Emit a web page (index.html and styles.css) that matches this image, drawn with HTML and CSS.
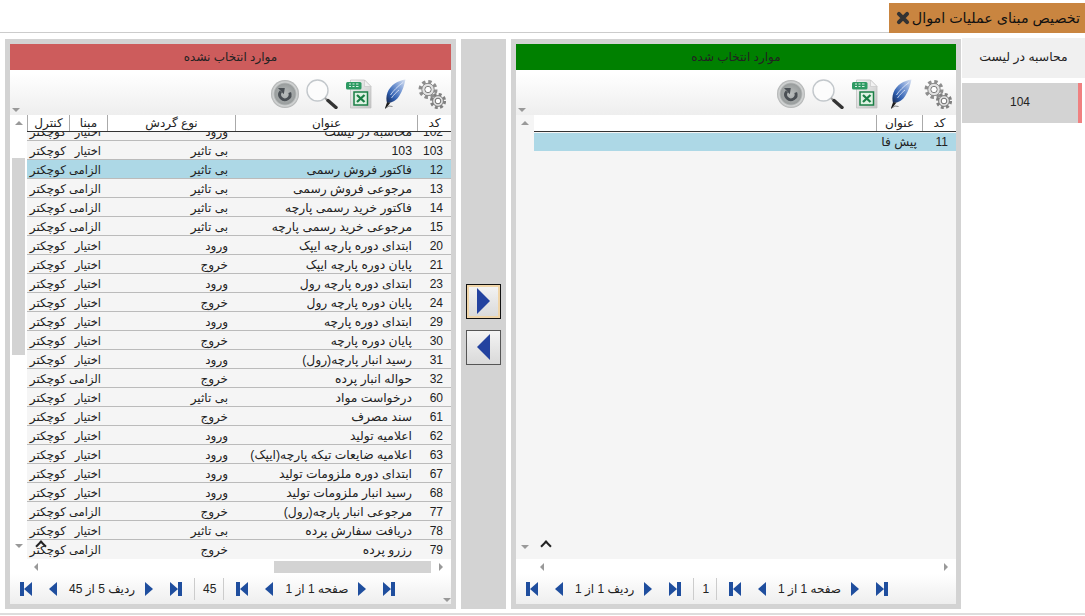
FILE: index.html
```html
<!DOCTYPE html>
<html lang="fa">
<head>
  <meta charset="UTF-8">
  <title>تخصیص مبنای عملیات اموال</title>
  <link rel="stylesheet" href="styles.css">
</head>
<body>
  <svg class="sprite" xmlns="http://www.w3.org/2000/svg">
    <defs>
      <linearGradient id="pageFill" x1="0" y1="0" x2="1" y2="1"><stop offset="0" stop-color="#f6f6f6"/><stop offset="1" stop-color="#c4c4c4"/></linearGradient>
      <radialGradient id="roundFill" cx="0.5" cy="0.5" r="0.5"><stop offset="0" stop-color="#b9bdbd"/><stop offset="0.72" stop-color="#9a9e9e"/><stop offset="0.85" stop-color="#d4d6d6"/><stop offset="1" stop-color="#aeb0b0"/></radialGradient>
      <linearGradient id="featherFill" x1="1" y1="0" x2="0" y2="1"><stop offset="0" stop-color="#dde5f3"/><stop offset="0.35" stop-color="#7f9fd6"/><stop offset="0.7" stop-color="#2f5fb0"/><stop offset="1" stop-color="#16264d"/></linearGradient>
    </defs>
    <symbol id="ico-gears" viewBox="0 0 28 30">
      <circle cx="10" cy="10.500" r="7" fill="none" stroke="#8e8e8e" stroke-width="5" stroke-dasharray="3 2.500"/>
      <circle cx="10" cy="10.500" r="6.200" fill="#e2e2e2" stroke="#8a8a8a"/>
      <circle cx="10" cy="10.500" r="3.200" fill="#fff" stroke="#7c7c7c"/>
      <circle cx="20" cy="22" r="6" fill="none" stroke="#808080" stroke-width="4.200" stroke-dasharray="2.600 2.100"/>
      <circle cx="20" cy="22" r="5.400" fill="#dedede" stroke="#7c7c7c"/>
      <circle cx="20" cy="22" r="2.800" fill="#fff" stroke="#6e6e6e"/>
    </symbol>
    <symbol id="ico-feather" viewBox="0 0 22 30">
      <path d="M21.500 .5C14 1.500 6.500 6 3.500 13.500 2 17.500 2.200 21 3 24l3.500-.5C9 23 13 21 15.500 16.500 18.500 11.500 20.500 6 21.500 .5z" fill="url(#featherFill)"/>
      <path d="M19 3.500C14 7 9 12 6.500 16M15 11c-2.500 2-5 4.500-7.500 8" fill="none" stroke="#e8eefa" stroke-width=".8"/>
      <path d="M3 23.500l3.500 0L3.800 27 1.500 29.500 1 29z" fill="#1c1c1c"/>
      <path d="M1 29.500L5 27l3.500.5" fill="none" stroke="#555" stroke-width=".7"/>
    </symbol>
    <symbol id="ico-excel" viewBox="0 0 26 30">
      <path d="M4.500 1h14l6.500 6.500V29H4.500z" fill="url(#pageFill)" stroke="#bdbdbd" stroke-width=".7"/>
      <path d="M18.500 1L25 7.500h-6.500z" fill="#f2f2f2" stroke="#bdbdbd" stroke-width=".5"/>
      <rect x="0" y="3" width="15.500" height="7.500" rx="1.500" fill="#2e9a63"/>
      <path d="M3 5h2M6.500 5h2M10 5h2.500M3 7.500h2M6.500 7.500h2M10 7.500h2.500" stroke="#d9efe2" stroke-width="1.200"/>
      <rect x="8" y="13" width="13.500" height="13" fill="#dff2e3" stroke="#1a7f45" stroke-width="1.500"/>
      <path d="M11 16l7.500 7M18.500 16l-7.500 7" stroke="#1a7f45" stroke-width="2.300"/>
    </symbol>
    <symbol id="ico-search" viewBox="0 0 32 30">
      <circle cx="11.500" cy="11.500" r="10.500" fill="#fcfcfc" stroke="#c3c8cc" stroke-width="1.400"/>
      <path d="M19 19l3 3" stroke="#9a9a9a" stroke-width="2"/>
      <path d="M22 21.500l8 7" stroke="#333" stroke-width="3.400" stroke-linecap="round"/>
    </symbol>
    <symbol id="ico-refresh" viewBox="0 0 28 28">
      <circle cx="14" cy="14" r="14" fill="url(#roundFill)"/>
      <path d="M18.700 12.500a5.200 5.200 0 1 1-8.900-1.200" fill="none" stroke="#4a4f54" stroke-width="2.900"/>
      <path d="M7 8h6.800l-1 6.200z" fill="#4a4f54"/>
    </symbol>
    <symbol id="ico-first" viewBox="0 0 12 14"><path d="M0 0h4v14H0zM12 0v14L4 7z"/></symbol>
    <symbol id="ico-prev" viewBox="0 0 8 14" preserveAspectRatio="none"><path d="M8 0v14L0 7z"/></symbol>
    <symbol id="ico-next" viewBox="0 0 8 14" preserveAspectRatio="none"><path d="M0 0v14l8-7z"/></symbol>
    <symbol id="ico-last" viewBox="0 0 12 14"><path d="M0 0v14l8-7zM8 0h4v14H8z"/></symbol>
  </svg>

  <div class="topbar">
    <div class="title-tab">
      <svg class="close-ico" viewBox="0 0 12 12"><path d="M2.500 2.500l7 7M9.500 2.500l-7 7" stroke="#333" stroke-width="3.400" stroke-linecap="round"/></svg>
      <span>تخصیص مبنای عملیات اموال</span>
    </div>
  </div>

  <div class="main">
    <!-- موارد انتخاب نشده -->
    <section class="panel panel-left">
      <div class="panel-title title-red">موارد انتخاب نشده</div>
      <div class="toolbar">
        <svg class="tool tool-gears"><use href="#ico-gears"/></svg>
        <svg class="tool tool-feather"><use href="#ico-feather"/></svg>
        <svg class="tool tool-excel"><use href="#ico-excel"/></svg>
        <svg class="tool tool-search"><use href="#ico-search"/></svg>
        <svg class="tool tool-refresh"><use href="#ico-refresh"/></svg>
        <i class="arrow-down toolbar-arrow"></i>
      </div>
      <div class="grid-wrap">
        <div class="gutter">
          <i class="arrow-up"></i>
          <div class="thumb-v"></div>
          <i class="arrow-down"></i>
        </div>
        <div class="grid">
          <div class="row row-head cols-5">
            <span>کد</span><span>عنوان</span><span>نوع گردش</span><span>مبنا</span><span>کنترل</span>
          </div>
          <div class="grid-body">
            <div class="row cols-5 row-clipped"><span>102</span><span>محاسبه در لیست</span><span>ورود</span><span>اختیار</span><span>کوچکتر</span></div>
            <div class="row cols-5"><span>103</span><span>103</span><span>بی تاثیر</span><span>اختیار</span><span>کوچکتر</span></div>
            <div class="row cols-5 row-active"><span>12</span><span>فاکتور فروش رسمی</span><span>بی تاثیر</span><span>الزامی</span><span>کوچکتر</span></div>
            <div class="row cols-5"><span>13</span><span>مرجوعی فروش رسمی</span><span>بی تاثیر</span><span>الزامی</span><span>کوچکتر</span></div>
            <div class="row cols-5"><span>14</span><span>فاکتور خرید رسمی پارچه</span><span>بی تاثیر</span><span>الزامی</span><span>کوچکتر</span></div>
            <div class="row cols-5"><span>15</span><span>مرجوعی خرید رسمی پارچه</span><span>بی تاثیر</span><span>الزامی</span><span>کوچکتر</span></div>
            <div class="row cols-5"><span>20</span><span>ابتدای دوره پارچه ایپک</span><span>ورود</span><span>اختیار</span><span>کوچکتر</span></div>
            <div class="row cols-5"><span>21</span><span>پایان دوره پارچه ایپک</span><span>خروج</span><span>اختیار</span><span>کوچکتر</span></div>
            <div class="row cols-5"><span>23</span><span>ابتدای دوره پارچه رول</span><span>ورود</span><span>اختیار</span><span>کوچکتر</span></div>
            <div class="row cols-5"><span>24</span><span>پایان دوره پارچه رول</span><span>خروج</span><span>اختیار</span><span>کوچکتر</span></div>
            <div class="row cols-5"><span>29</span><span>ابتدای دوره پارچه</span><span>ورود</span><span>اختیار</span><span>کوچکتر</span></div>
            <div class="row cols-5"><span>30</span><span>پایان دوره پارچه</span><span>خروج</span><span>اختیار</span><span>کوچکتر</span></div>
            <div class="row cols-5"><span>31</span><span>رسید انبار پارچه(رول)</span><span>ورود</span><span>اختیار</span><span>کوچکتر</span></div>
            <div class="row cols-5"><span>32</span><span>حواله انبار پرده</span><span>خروج</span><span>الزامی</span><span>کوچکتر</span></div>
            <div class="row cols-5"><span>60</span><span>درخواست مواد</span><span>بی تاثیر</span><span>اختیار</span><span>کوچکتر</span></div>
            <div class="row cols-5"><span>61</span><span>سند مصرف</span><span>خروج</span><span>اختیار</span><span>کوچکتر</span></div>
            <div class="row cols-5"><span>62</span><span>اعلامیه تولید</span><span>ورود</span><span>اختیار</span><span>کوچکتر</span></div>
            <div class="row cols-5"><span>63</span><span>اعلامیه ضایعات تیکه پارچه(ایپک)</span><span>ورود</span><span>اختیار</span><span>کوچکتر</span></div>
            <div class="row cols-5"><span>67</span><span>ابتدای دوره ملزومات تولید</span><span>ورود</span><span>اختیار</span><span>کوچکتر</span></div>
            <div class="row cols-5"><span>68</span><span>رسید انبار ملزومات تولید</span><span>ورود</span><span>اختیار</span><span>کوچکتر</span></div>
            <div class="row cols-5"><span>77</span><span>مرجوعی انبار پارچه(رول)</span><span>خروج</span><span>الزامی</span><span>کوچکتر</span></div>
            <div class="row cols-5"><span>78</span><span>دریافت سفارش پرده</span><span>بی تاثیر</span><span>اختیار</span><span>کوچکتر</span></div>
            <div class="row cols-5 row-last"><span>79</span><span>رزرو پرده</span><span>خروج</span><span>الزامی</span><span>کوچکتر</span></div>
          </div>
        </div>
        <i class="caret caret-left"></i>
      </div>
      <div class="hscroll">
        <i class="arrow-left"></i>
        <div class="thumb-h"></div>
        <i class="arrow-right"></i>
      </div>
      <div class="pager">
        <svg class="pg-first"><use href="#ico-first"/></svg>
        <svg class="pg-prev"><use href="#ico-prev"/></svg>
        <span class="pg-text" dir="rtl">ردیف 5 از 45</span>
        <svg class="pg-next"><use href="#ico-next"/></svg>
        <svg class="pg-last"><use href="#ico-last"/></svg>
        <span class="pg-count">45</span>
        <svg class="pg-first"><use href="#ico-first"/></svg>
        <svg class="pg-prev"><use href="#ico-prev"/></svg>
        <span class="pg-text" dir="rtl">صفحه 1 از 1</span>
        <svg class="pg-next"><use href="#ico-next"/></svg>
        <svg class="pg-last"><use href="#ico-last"/></svg>
        <i class="arrow-down pager-arrow"></i>
      </div>
    </section>

    <div class="mover">
      <button class="move-btn move-active"><svg class="move-ico"><use href="#ico-next"/></svg></button>
      <button class="move-btn"><svg class="move-ico"><use href="#ico-prev"/></svg></button>
    </div>

    <!-- موارد انتخاب شده -->
    <section class="panel panel-right">
      <div class="panel-title title-green">موارد انتخاب شده</div>
      <div class="toolbar">
        <svg class="tool tool-gears"><use href="#ico-gears"/></svg>
        <svg class="tool tool-feather"><use href="#ico-feather"/></svg>
        <svg class="tool tool-excel"><use href="#ico-excel"/></svg>
        <svg class="tool tool-search"><use href="#ico-search"/></svg>
        <svg class="tool tool-refresh"><use href="#ico-refresh"/></svg>
        <i class="arrow-down toolbar-arrow"></i>
      </div>
      <div class="grid-wrap">
        <div class="gutter">
          <i class="arrow-up"></i>
          <i class="arrow-down gutter-end"></i>
        </div>
        <div class="grid">
          <div class="row row-head cols-2">
            <span>کد</span><span>عنوان</span><span class="cell-empty"></span>
          </div>
          <div class="grid-body">
            <div class="row cols-2 row-active row-first"><span>11</span><span>پیش فا</span><span></span></div>
          </div>
        </div>
        <i class="caret caret-right"></i>
      </div>
      <div class="hscroll">
        <i class="arrow-left"></i>
        <div class="thumb-none"></div>
        <i class="arrow-right"></i>
      </div>
      <div class="pager">
        <svg class="pg-first"><use href="#ico-first"/></svg>
        <svg class="pg-prev"><use href="#ico-prev"/></svg>
        <span class="pg-text" dir="rtl">ردیف 1 از 1</span>
        <svg class="pg-next"><use href="#ico-next"/></svg>
        <svg class="pg-last"><use href="#ico-last"/></svg>
        <span class="pg-count">1</span>
        <svg class="pg-first"><use href="#ico-first"/></svg>
        <svg class="pg-prev"><use href="#ico-prev"/></svg>
        <span class="pg-text" dir="rtl">صفحه 1 از 1</span>
        <svg class="pg-next"><use href="#ico-next"/></svg>
        <svg class="pg-last"><use href="#ico-last"/></svg>
      </div>
    </section>

    <aside class="side">
      <div class="side-head">محاسبه در لیست</div>
      <div class="side-item">104</div>
    </aside>
  </div>
  <div class="footer-line"></div>
</body>
</html>
```

FILE: styles.css
```css
html, body {
  margin: 0;
  height: 616px;
  overflow: hidden;
  background: #fff;
}
body {
  font-family: "Liberation Sans", "DejaVu Sans", sans-serif;
  font-size: 12px;
  color: #222;
}
.sprite {
  display: block;
  width: 0;
  height: 0;
}
i {
  display: block;
}

/* top bar */
.topbar {
  height: 33px;
  padding-top: 3px;
  box-sizing: border-box;
  border-bottom: 1px solid #ccc;
  display: flex;
  justify-content: flex-end;
}
.title-tab {
  width: 196px;
  height: 30px;
  box-sizing: border-box;
  background: #c98540;
  display: flex;
  align-items: center;
  justify-content: space-between;
  padding: 0 5px 0 7px;
  font-size: 14.3px;
  color: #111;
}
.close-ico {
  width: 14px;
  height: 14px;
}

.main {
  display: flex;
  height: 570px;
  margin-top: 6px;
  padding-left: 5px;
}

/* panels */
.panel {
  border: 5px solid #d3d3d3;
  box-sizing: border-box;
  height: 570px;
  background: #fff;
  display: flex;
  flex-direction: column;
}
.panel-left {
  width: 451px;
}
.panel-right {
  width: 450px;
}
.panel-title {
  height: 26px;
  flex: none;
  text-align: center;
  line-height: 27px;
  margin-bottom: 3px;
  color: #222;
}
.title-red {
  background: #cd5c5c;
}
.title-green {
  background: #008000;
}
.toolbar {
  height: 42px;
  flex: none;
  position: relative;
  display: flex;
  flex-direction: row-reverse;
  align-items: center;
  padding-right: 5px;
  box-sizing: border-box;
  background: linear-gradient(#fff, #eee);
}
.panel-right .toolbar {
  padding-right: 4px;
}
.tool {
  flex: none;
}
.tool-gears { width: 28px; height: 30px; }
.tool-feather { width: 22px; height: 30px; margin-right: 12px; }
.tool-excel { width: 26px; height: 30px; margin-right: 12px; }
.tool-search { width: 32px; height: 30px; margin-right: 8px; }
.tool-refresh { width: 28px; height: 28px; margin-right: 7px; }

.toolbar-arrow {
  position: absolute;
  left: 2px;
  bottom: 3px;
}

/* grid */
.grid-wrap {
  height: 444px;
  flex: none;
  display: flex;
  position: relative;
}
.gutter {
  width: 17px;
  flex: none;
  display: flex;
  flex-direction: column;
  align-items: center;
  padding-top: 6px;
  box-sizing: border-box;
  background: #fff;
}
.panel-right .gutter {
  width: 18px;
  background: #f5f5f5;
}
.thumb-v {
  width: 13px;
  height: 197px;
  margin-top: 33px;
  margin-bottom: 189px;
  background: #d3d3d3;
}
.gutter-end {
  margin-top: auto;
  margin-bottom: 10px;
}
.grid {
  flex: 1;
  min-width: 0;
  display: flex;
  flex-direction: column;
  background: #f5f5f5;
}
.grid-body {
  flex: 1;
  overflow: hidden;
}
.row {
  display: grid;
  height: 19px;
  box-sizing: border-box;
  direction: rtl;
  border-bottom: 1px solid #bbb;
  line-height: 20px;
}
.cols-5 {
  grid-template-columns: 34px 182px 128px 38px 42px;
}
.cols-2 {
  grid-template-columns: 34px 46px 1fr;
}
.row span {
  overflow: hidden;
  white-space: nowrap;
  padding-right: 4px;
}
.row span:nth-child(1) { padding-right: 8px; }
.row span:nth-child(2) { padding-right: 5px; font-size: 12.3px; }
.row span:nth-child(3) { padding-right: 7px; }
.row span:nth-child(4) { padding-right: 6px; font-size: 11.5px; }
.row span:nth-child(5) { padding-right: 3px; }
.row-clipped {
  margin-top: -10px;
}
.row-active {
  background: #add8e6;
}
.row-last {
  border-bottom: none;
}
.row-first {
  height: 18px;
  margin-top: 1px;
  border-bottom: none;
  line-height: 19px;
}
.row-head {
  height: 17px;
  flex: none;
  background: #fff;
  border-bottom: 1px solid #333;
  line-height: 17px;
  position: relative;
}
.row-head span,
.row-head span:nth-child(n) {
  padding: 0;
  font-size: 12px;
  text-align: center;
  border-left: 1px solid #aaa;
}
.row-head .cell-empty,
.row-head .cell-empty:nth-child(n) {
  border-left: none;
}
.caret {
  position: absolute;
  width: 6px;
  height: 6px;
  border-left: 2px solid #222;
  border-top: 2px solid #222;
  transform: rotate(45deg);
  bottom: 9px;
}
.caret-left { left: 27px; }
.caret-right { left: 26px; }

/* small scroll arrows */
.arrow-up {
  width: 0;
  height: 0;
  border: 4px solid transparent;
  border-top: none;
  border-bottom: 4px solid #999;
}
.arrow-down {
  width: 0;
  height: 0;
  border: 4px solid transparent;
  border-bottom: none;
  border-top: 4px solid #999;
}
.arrow-left {
  width: 0;
  height: 0;
  border: 4px solid transparent;
  border-left: none;
  border-right: 4px solid #999;
}
.arrow-right {
  width: 0;
  height: 0;
  border: 4px solid transparent;
  border-right: none;
  border-left: 4px solid #999;
}

.hscroll {
  height: 15px;
  flex: none;
  display: flex;
  align-items: center;
  padding: 0 8px 0 24px;
  background: #fff;
}
.thumb-h {
  width: 157px;
  height: 12px;
  margin-left: auto;
  margin-right: 8px;
  background: #d3d3d3;
}
.thumb-none {
  flex: 1;
}

/* pager */
.pager {
  height: 30px;
  flex: none;
  position: relative;
  display: flex;
  align-items: center;
  padding-left: 10px;
  box-sizing: border-box;
  background: linear-gradient(#fff, #eee);
  color: #222;
}
.pager svg {
  height: 14px;
  flex: none;
  fill: #1f4e9e;
}
.pg-first {
  width: 12px;
  margin-right: 17px;
}
.pg-prev {
  width: 8px;
  margin-right: 12px;
}
.pg-next {
  width: 8px;
  margin: 0 17px 0 10px;
}
.pg-last {
  width: 12px;
}
.pg-text {
  flex: none;
}
.pg-count {
  padding: 0 7px 0 8px;
  margin: 0 12px 0 12px;
  border-left: 1px solid #ccc;
  border-right: 1px solid #ccc;
  line-height: 22px;
}
.pager-arrow {
  position: absolute;
  right: 0;
  bottom: 2px;
}

/* move buttons */
.mover {
  width: 45px;
  height: 570px;
  flex: none;
  margin: 0 5px;
  background: #d3d3d3;
  display: flex;
  flex-direction: column;
  align-items: center;
  justify-content: center;
  gap: 11px;
}
.move-btn {
  width: 35px;
  height: 35px;
  padding: 0;
  border: 1px solid #555;
  background: linear-gradient(#f4f4f4, #e6e6e6 50%, #d9d9d9);
  display: flex;
  align-items: center;
  justify-content: center;
}
.move-active {
  border-color: #111;
  box-shadow: inset 0 0 0 2px #f0d5a8;
}
.move-ico {
  width: 13px;
  height: 26px;
  fill: #23429f;
}

/* side list */
.side {
  flex: 1;
  margin: -1px 0 0 1px;
  text-align: center;
}
.side-head {
  height: 40px;
  line-height: 39px;
  background: #f0f0f0;
  margin-bottom: 5px;
  font-size: 12.4px;
}
.side-item {
  width: 120px;
  height: 40px;
  line-height: 38px;
  box-sizing: border-box;
  background: #d3d3d3;
  border-right: 4px solid #f08080;
}
.footer-line {
  height: 2px;
  margin-top: 4px;
  background: #ddd;
}
```
